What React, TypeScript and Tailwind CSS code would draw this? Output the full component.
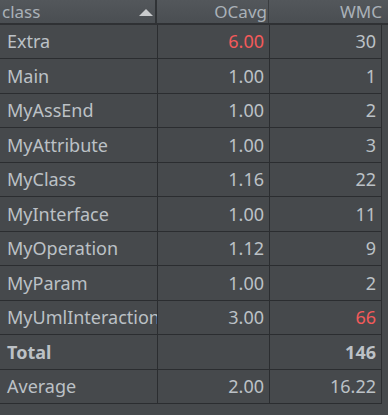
const rows = [
  { name: "Extra", oc: "6.00", wmc: "30", ocRed: true },
  { name: "Main", oc: "1.00", wmc: "1" },
  { name: "MyAssEnd", oc: "1.00", wmc: "2" },
  { name: "MyAttribute", oc: "1.00", wmc: "3" },
  { name: "MyClass", oc: "1.16", wmc: "22" },
  { name: "MyInterface", oc: "1.00", wmc: "11" },
  { name: "MyOperation", oc: "1.12", wmc: "9" },
  { name: "MyParam", oc: "1.00", wmc: "2" },
  { name: "MyUmlInteraction", oc: "3.00", wmc: "66", wmcRed: true },
  { name: "Total", oc: "", wmc: "146", bold: true },
  { name: "Average", oc: "2.00", wmc: "16.22" },
];

export default function App() {
  return (
    <div
      className="w-[388px] h-[415px] overflow-hidden bg-[#46494c] text-[#bcc1c6]"
      style={{ fontFamily: '"Noto Sans", "Open Sans", sans-serif' }}
    >
      {/* header */}
      <div className="flex h-[25px] bg-gradient-to-b from-[#53575b] to-[#4a4e52] border-b-2 border-[#2f3134] text-[17px] text-[#aab1b8]">
        <div className="relative w-[157px] flex items-center pl-[2px] border-r-2 border-[#303336]">
          <span className="leading-none">class</span>
          <svg className="absolute left-[139px] top-[9px]" width="14" height="7" viewBox="0 0 14 7">
            <polygon points="0,7 7,0 14,7" fill="#c9cbcd" />
          </svg>
        </div>
        <div className="w-[112px] flex items-center justify-end pr-[1px] border-r border-[#3a3d40]">
          <span className="leading-none">OCavg</span>
        </div>
        <div className="w-[113px] flex items-center justify-end pr-0">
          <span className="leading-none">WMC</span>
        </div>
      </div>

      {/* body */}
      <div className="w-[382px] border-r border-[#2b2d30]">
        {rows.map((r, i) => (
          <div
            key={r.name}
            className={`flex border-b border-[#2b2d30] text-[18px] ${i % 2 === 0 ? "h-[34px]" : "h-[35px]"} ${r.bold ? "font-bold" : ""}`}
          >
            <div className="w-[158px] shrink-0 flex items-center pl-[7px] border-r border-[#2b2d30] overflow-hidden whitespace-nowrap">
              {r.name}
            </div>
            <div
              className={`w-[112px] shrink-0 flex items-center justify-end pr-[5px] border-r border-[#2b2d30] ${r.ocRed ? "text-[#f25a5a]" : ""}`}
            >
              {r.oc}
            </div>
            <div
              className={`flex-1 flex items-center justify-end pr-[5px] ${r.wmcRed ? "text-[#f25a5a]" : ""}`}
            >
              {r.wmc}
            </div>
          </div>
        ))}
      </div>
    </div>
  );
}
